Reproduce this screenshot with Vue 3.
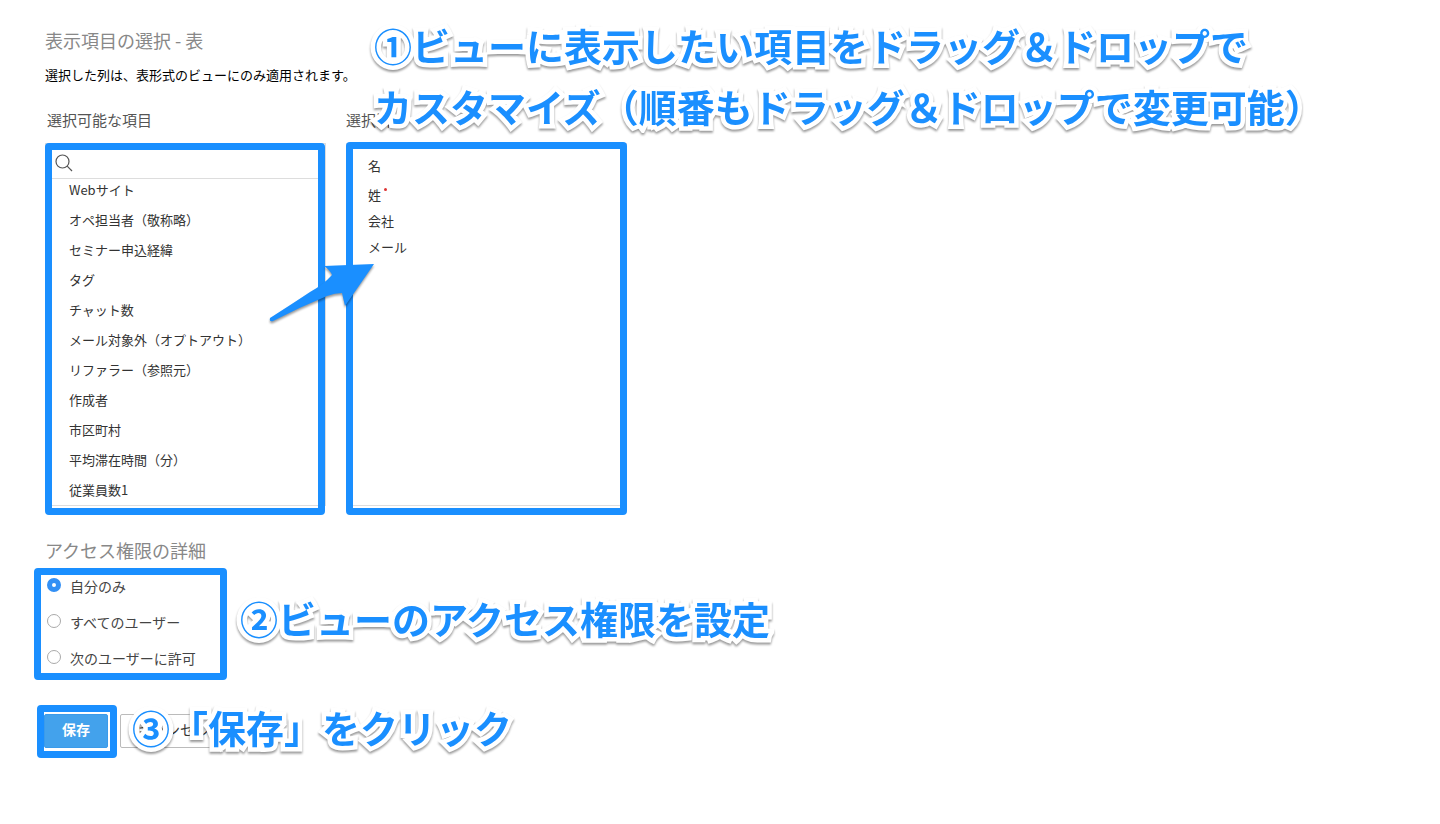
<script setup>
import { ref } from 'vue'

const available = [
  'Webサイト',
  'オペ担当者（敬称略）',
  'セミナー申込経緯',
  'タグ',
  'チャット数',
  'メール対象外（オプトアウト）',
  'リファラー（参照元）',
  '作成者',
  '市区町村',
  '平均滞在時間（分）',
  '従業員数1',
]
const selected = [
  { name: '名' },
  { name: '姓', required: true },
  { name: '会社' },
  { name: 'メール' },
]
const accessOptions = ['自分のみ', 'すべてのユーザー', '次のユーザーに許可']
const access = ref('自分のみ')
const query = ref('')
</script>

<template>
  <main class="page">
    <h1 class="title">表示項目の選択 - 表</h1>
    <p class="lead">選択した列は、表形式のビューにのみ適用されます。</p>

    <div class="columns">
      <section class="column">
        <h2 class="label">選択可能な項目</h2>
        <div class="panel">
          <div class="search">
            <svg class="search-icon" viewBox="0 0 18 18" aria-hidden="true">
              <circle cx="7.5" cy="7.5" r="6.5" />
              <path d="M12.2 12.2 L17 17" />
            </svg>
            <input v-model="query" type="text" class="search-input" aria-label="検索" />
          </div>
          <ul class="list">
            <li v-for="item in available" :key="item" class="item">{{ item }}</li>
          </ul>
          <div class="frame frame-left"></div>
        </div>
      </section>

      <section class="column">
        <h2 class="label">選択済</h2>
        <div class="panel">
          <ul class="list chosen">
            <li v-for="item in selected" :key="item.name" class="chosen-item" :class="{ required: item.required }">
              {{ item.name }}<span v-if="item.required" class="star"></span>
            </li>
          </ul>
          <div class="frame frame-right"></div>
        </div>
      </section>

      <svg class="arrow" viewBox="0 0 116 68" aria-hidden="true">
        <path d="M5 56 Q30 40 45 30 Q58 23 67 13 Q65 8 59 4 L109 2 L80 44 L77 31 Q70 31 62 34 Q35 45 8 59 Q4 60 5 56 Z" />
      </svg>
    </div>

    <section class="access">
      <h2 class="title">アクセス権限の詳細</h2>
      <div class="options">
        <label v-for="o in accessOptions" :key="o" class="option">
          <input v-model="access" type="radio" name="access" :value="o" class="radio" />
          <span>{{ o }}</span>
        </label>
        <div class="frame frame-access"></div>
        <p class="note note-two">②ビューのアクセス権限を設定</p>
      </div>
    </section>

    <div class="actions">
      <div class="save-wrap">
        <button type="button" class="button save">保存</button>
        <div class="frame frame-save"></div>
      </div>
      <button type="button" class="button cancel">キャンセル</button>
      <p class="note note-three">③「保存」をクリック</p>
    </div>

    <p class="note note-one">①ビューに表示したい項目をドラッグ＆ドロップで<br />カスタマイズ（順番もドラッグ＆ドロップで変更可能）</p>
  </main>
</template>

<style>
body {
  background: #fff;
}
</style>

<style scoped>
.page {
  position: relative;
  padding: 27px 45px;
  font-family: "Noto Sans CJK JP", sans-serif;
  font-size: 13px;
  color: #333;
}
.title {
  margin: 0;
  font-size: 18px;
  line-height: 26px;
  font-weight: 400;
  color: #888;
}
.lead {
  margin: 12px 0 0;
  line-height: 20px;
  color: #000;
}
.columns {
  position: relative;
  display: flex;
  gap: 20px;
  margin-top: 22px;
}
.column {
  width: 281px;
}
.label {
  margin: 0;
  padding-left: 2px;
  font-size: 15px;
  line-height: 26px;
  font-weight: 400;
  color: #555;
}
.column + .column .label {
  padding-left: 0;
}
.panel {
  position: relative;
  box-sizing: border-box;
  height: 363px;
  margin-top: 10px;
  border: 1px solid #ddd;
}
.search {
  display: flex;
  align-items: center;
  height: 34px;
  padding-left: 9px;
  border-bottom: 1px solid #ddd;
}
.search-icon {
  width: 18px;
  height: 18px;
  margin-top: 4px;
  fill: none;
  stroke: #555;
  stroke-width: 1.2;
}
.search-input {
  flex: 1;
  min-width: 0;
  border: 0;
  outline: 0;
  background: transparent;
  font: inherit;
}
.list {
  margin: 0;
  padding: 0;
  list-style: none;
}
.item {
  height: 30px;
  padding-left: 23px;
  line-height: 22px;
}
.item:last-child {
  height: 24px;
}
.chosen {
  padding: 9px 0 0 21px;
}
.chosen-item {
  line-height: 26px;
}
.required {
  padding-top: 3px;
}
.star {
  display: inline-block;
  width: 3px;
  height: 3px;
  margin-left: 3px;
  border-radius: 50%;
  background: #d33;
  vertical-align: 9px;
}
.frame {
  position: absolute;
  box-sizing: border-box;
  border: 7px solid #1a8fff;
  border-radius: 4px;
  pointer-events: none;
}
.frame-left {
  inset: -1px 0 -10px -1px;
}
.frame-right {
  inset: -2px -1px -10px -1px;
}
.arrow {
  position: absolute;
  top: 155px;
  left: 220px;
  width: 116px;
  height: 68px;
  fill: #1a8fff;
  filter: drop-shadow(0 2px 1px rgba(0, 0, 0, 0.4));
}
.access {
  margin-top: 31px;
}
.options {
  position: relative;
  width: 192px;
  margin-top: 5px;
}
.option {
  display: flex;
  gap: 9px;
  height: 36px;
  padding-left: 2px;
  font-size: 14px;
  line-height: 36px;
  color: #444;
}
.radio {
  appearance: none;
  flex: none;
  box-sizing: border-box;
  width: 14px;
  height: 14px;
  margin: 10px 0 0;
  border: 1px solid #aaa;
  border-radius: 50%;
  background: #fff;
}
.radio:checked {
  border: 5px solid #3390f5;
}
.frame-access {
  inset: 0 10px -4px -11px;
}
.actions {
  position: relative;
  display: flex;
  gap: 12px;
  margin: 38px 0 0 -1px;
}
.save-wrap {
  position: relative;
}
.button {
  display: block;
  box-sizing: border-box;
  height: 34px;
  padding: 0 17px 4px;
  border: 1px solid #bbb;
  border-radius: 2px;
  background: #fff;
  font-family: inherit;
  font-size: 14px;
  line-height: 28px;
  color: #333;
}
.save {
  border-color: #3b9bea;
  background: #43a2ec;
  font-weight: 700;
  color: #fff;
}
.frame-save {
  inset: -9px -9px -10px -7px;
}
.note {
  position: absolute;
  margin: 0;
  font-size: 38px;
  line-height: 61px;
  font-weight: 700;
  white-space: nowrap;
  color: #1a8fff;
  -webkit-text-stroke: 9px #fff;
  paint-order: stroke fill;
  stroke-linejoin: round;
  filter: drop-shadow(0 2px 1px rgba(0, 0, 0, 0.4));
}
.note-one {
  top: 14px;
  left: 374px;
}
.note-two {
  top: 19px;
  left: 195px;
}
.note-three {
  top: -18px;
  left: 88px;
}
</style>
